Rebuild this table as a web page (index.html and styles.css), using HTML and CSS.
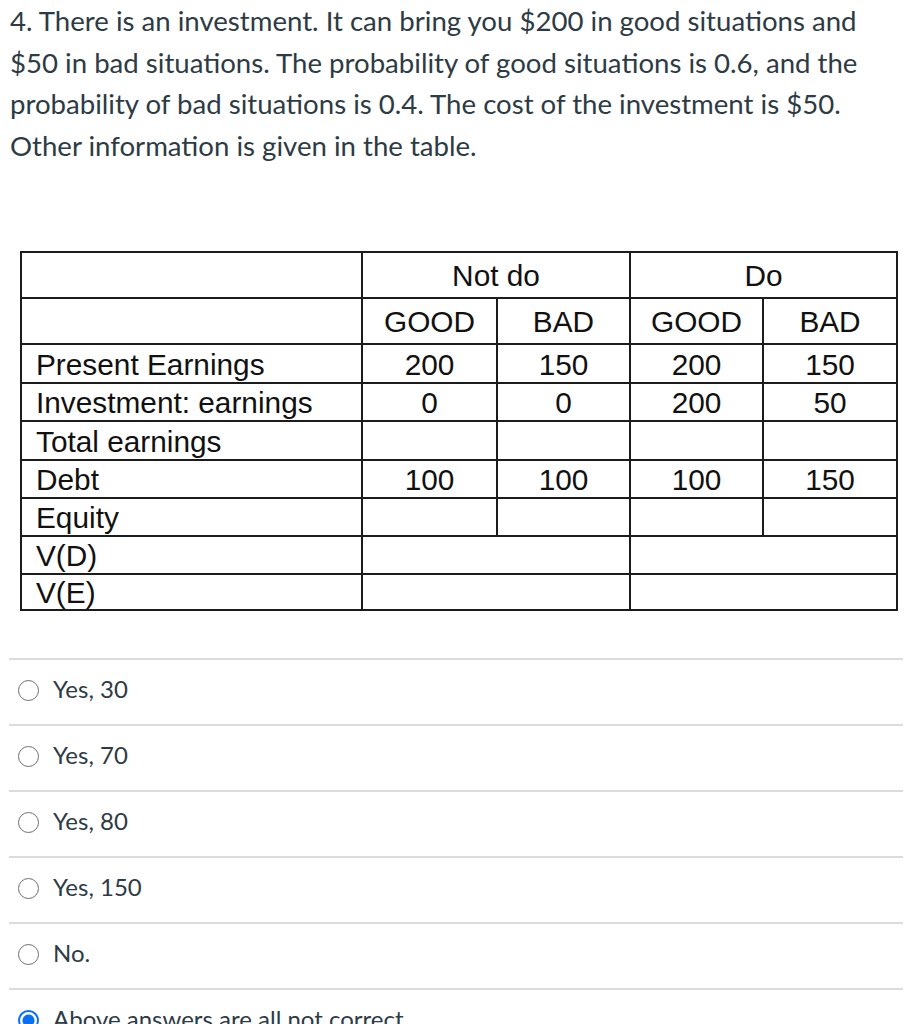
FILE: index.html
```html
<!DOCTYPE html>
<html lang="en">
<head>
<meta charset="utf-8">
<title>Question 4</title>
<link rel="stylesheet" href="styles.css">
</head>
<body>
<div class="question">
  <p class="question-text">4. There is an investment. It can bring you $200 in good situations and $50 in bad situations. The probability of good situations is 0.6, and the probability of bad situations is 0.4. The cost of the investment is $50. Other information is given in the table.</p>
  <table class="grid">
    <colgroup>
      <col class="c-label">
      <col class="c-a">
      <col class="c-b">
      <col class="c-c">
      <col class="c-d">
    </colgroup>
    <tr class="r-head">
      <td></td>
      <td colspan="2" class="num">Not do</td>
      <td colspan="2" class="num">Do</td>
    </tr>
    <tr class="r-head">
      <td></td>
      <td class="num">GOOD</td>
      <td class="num">BAD</td>
      <td class="num">GOOD</td>
      <td class="num">BAD</td>
    </tr>
    <tr class="r-39">
      <td class="label">Present Earnings</td>
      <td class="num">200</td>
      <td class="num">150</td>
      <td class="num">200</td>
      <td class="num">150</td>
    </tr>
    <tr class="r-38">
      <td class="label">Investment: earnings</td>
      <td class="num">0</td>
      <td class="num">0</td>
      <td class="num">200</td>
      <td class="num">50</td>
    </tr>
    <tr class="r-39">
      <td class="label">Total earnings</td>
      <td></td>
      <td></td>
      <td></td>
      <td></td>
    </tr>
    <tr class="r-38">
      <td class="label">Debt</td>
      <td class="num">100</td>
      <td class="num">100</td>
      <td class="num">100</td>
      <td class="num">150</td>
    </tr>
    <tr class="r-38">
      <td class="label">Equity</td>
      <td></td>
      <td></td>
      <td></td>
      <td></td>
    </tr>
    <tr class="r-38">
      <td class="label">V(D)</td>
      <td colspan="2"></td>
      <td colspan="2"></td>
    </tr>
    <tr class="r-36">
      <td class="label">V(E)</td>
      <td colspan="2"></td>
      <td colspan="2"></td>
    </tr>
  </table>
  <ul class="answers">
    <li class="answer"><span class="radio"></span><span class="answer-text">Yes, 30</span></li>
    <li class="answer"><span class="radio"></span><span class="answer-text">Yes, 70</span></li>
    <li class="answer"><span class="radio"></span><span class="answer-text">Yes, 80</span></li>
    <li class="answer"><span class="radio"></span><span class="answer-text">Yes, 150</span></li>
    <li class="answer"><span class="radio"></span><span class="answer-text">No.</span></li>
    <li class="answer"><span class="radio checked"></span><span class="answer-text">Above answers are all not correct.</span></li>
  </ul>
</div>
</body>
</html>
```
FILE: styles.css
```css
html, body {
  margin: 0;
  padding: 0;
  background: #ffffff;
}

body {
  font-family: Lato, "Open Sans", sans-serif;
  color: #2d3b45;
}

.question {
  padding: 0;
}

.question-text {
  margin: 0;
  padding: 0 45px 0 10px;
  font-size: 27.6px;
  line-height: 41.6px;
}

.grid {
  margin: 85px 0 0 20px;
  table-layout: fixed;
  width: 878px;
  border-collapse: separate;
  border-spacing: 0;
  border-top: 2px solid #1c1c1c;
  border-left: 2px solid #1c1c1c;
  font-family: "Liberation Sans", Arial, sans-serif;
  font-size: 29.8px;
  color: #111111;
}

.c-label { width: 341px; }
.c-a { width: 135px; }
.c-b { width: 133px; }
.c-c { width: 133px; }
.c-d { width: 134px; }

.grid td {
  border-right: 2px solid #1c1c1c;
  border-bottom: 2px solid #1c1c1c;
  padding: 2px 0 0 0;
  line-height: 30px;
  vertical-align: middle;
  white-space: nowrap;
  box-sizing: border-box;
}

.grid td.label {
  padding-left: 14px;
  text-align: left;
}

.grid td.num {
  text-align: center;
}

.r-head td { height: 46px; }
.r-39 td { height: 39px; }
.r-38 td { height: 38px; }
.r-36 td { height: 36px; }

.answers {
  list-style: none;
  margin: 47px 14px 0 9px;
  padding: 0;
}

.answer {
  display: flex;
  align-items: center;
  gap: 14px;
  height: 66px;
  box-sizing: border-box;
  border-top: 2px solid #dcdcdc;
  padding: 0 0 7px 9px;
}

.radio {
  flex: none;
  width: 21px;
  height: 21px;
  box-sizing: border-box;
  border: 1.5px solid #6e6e6e;
  border-radius: 50%;
  background: #ffffff;
  margin-top: 3px;
}

.radio.checked {
  border: 2px solid #0b6ff2;
  background: radial-gradient(circle, #0b6ff2 0 5.5px, #ffffff 6.5px);
}

.answer-text {
  font-size: 24px;
  line-height: 30px;
  color: #2d3b45;
}
```
